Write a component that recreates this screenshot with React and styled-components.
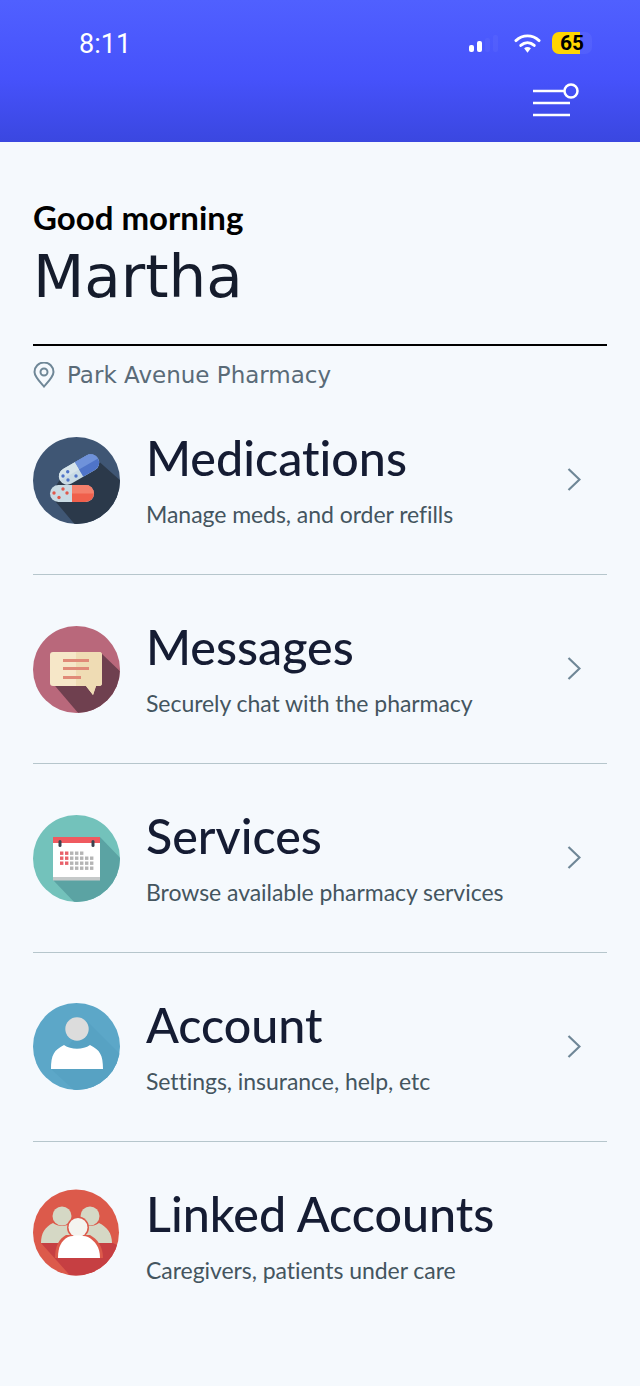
import React from "react";
import styled, { createGlobalStyle } from "styled-components";

const GlobalStyle = createGlobalStyle`
  html, body {
    margin: 0;
    padding: 0;
    background: #f5f9fd;
  }
`;

const MedicationsIcon = () => (
  <svg width="87" height="87" viewBox="0 0 87 87">
    <defs>
      <clipPath id="medClip"><circle cx="43.5" cy="43.5" r="43.5" /></clipPath>
    </defs>
    <circle cx="43.5" cy="43.5" r="43.5" fill="#3f5674" />
    <g clipPath="url(#medClip)">
      <polygon points="17,58 30,38 62,21 90,46 90,90 44,90" fill="#2b394a" />
    </g>
    <g transform="rotate(-30 46 32.5)">
      <rect x="24" y="24" width="44" height="17" rx="8.5" fill="#c9dbe4" />
      <path d="M46 24h13.500a8.500 8.500 0 0 1 0 17H46z" fill="#4f74c8" />
      <path d="M46 24h13.500a8.500 8.500 0 0 1 8.500 8.500H46z" fill="#6f92da" />
      <path d="M24 32.500a8.500 8.500 0 0 1 8.500-8.500H46v8.500z" fill="#d6e4ea" />
    </g>
    <g fill="#4f74c8">
      <circle cx="34.700" cy="34.700" r="1.700" />
      <circle cx="30" cy="39" r="1.700" />
      <circle cx="35" cy="43" r="1.700" />
      <circle cx="43" cy="39" r="1.700" />
    </g>
    <rect x="17" y="48" width="44" height="17" rx="8.5" fill="#c9dbe4" />
    <path d="M39 48h13.5a8.5 8.5 0 0 1 0 17H39z" fill="#f0604c" />
    <path d="M39 48h13.5a8.5 8.5 0 0 1 8.5 8.5H39z" fill="#f4806c" />
    <g fill="#e0594c">
      <circle cx="21" cy="56" r="1.7" />
      <circle cx="30" cy="52" r="1.7" />
      <circle cx="34" cy="56" r="1.7" />
      <circle cx="26" cy="60.500" r="1.7" />
    </g>
  </svg>
);

const MessagesIcon = () => (
  <svg width="87" height="87" viewBox="0 0 87 87">
    <defs>
      <clipPath id="msgClip"><circle cx="43.5" cy="43.5" r="43.5" /></clipPath>
    </defs>
    <circle cx="43.5" cy="43.5" r="43.5" fill="#b9687b" />
    <g clipPath="url(#msgClip)">
      <polygon points="17,54 68,27 92,50 92,92 46,88" fill="#6f404f" />
    </g>
    <path d="M20 26h46a3 3 0 0 1 3 3v28a3 3 0 0 1-3 3h-3l-3 9-7-9H20a3 3 0 0 1-3-3V29a3 3 0 0 1 3-3z" fill="#f6e7c8" />
    <path d="M43 26h23a3 3 0 0 1 3 3v28a3 3 0 0 1-3 3h-3l-3 9-7-9H43z" fill="#efdcb4" />
    <g fill="#e08a78">
      <rect x="30" y="33" width="26" height="3" />
      <rect x="30" y="41" width="26" height="3" />
      <rect x="30" y="50" width="18" height="3" />
    </g>
  </svg>
);

const gridDots = [
  [0, 0, "#e8616a"], [1, 0, "#e8616a"], [2, 0, "#b5b5b5"], [3, 0, "#b5b5b5"], [4, 0, "#b5b5b5"],
  [0, 1, "#e8616a"], [1, 1, "#e8616a"], [2, 1, "#b5b5b5"], [3, 1, "#b5b5b5"], [4, 1, "#b5b5b5"], [5, 1, "#b5b5b5"], [6, 1, "#b5b5b5"],
  [0, 2, "#e8616a"], [1, 2, "#e8616a"], [2, 2, "#b5b5b5"], [3, 2, "#b5b5b5"], [4, 2, "#b5b5b5"], [5, 2, "#b5b5b5"], [6, 2, "#b5b5b5"],
  [2, 3, "#b5b5b5"], [3, 3, "#b5b5b5"], [4, 3, "#b5b5b5"], [5, 3, "#b5b5b5"], [6, 3, "#b5b5b5"],
];

const ServicesIcon = () => (
  <svg width="87" height="87" viewBox="0 0 87 87">
    <defs>
      <clipPath id="calClip"><circle cx="43.5" cy="43.5" r="43.5" /></clipPath>
    </defs>
    <circle cx="43.5" cy="43.5" r="43.5" fill="#73c2bb" />
    <g clipPath="url(#calClip)">
      <polygon points="20,65 67,22 92,48 92,92 44,90" fill="#5ba3a3" />
    </g>
    <rect x="20" y="22" width="47" height="7" fill="#ef5a5f" />
    <rect x="20" y="28" width="47" height="34" fill="#ffffff" />
    <rect x="20" y="62" width="47" height="3.5" fill="#c5c9c9" />
    <rect x="25.5" y="25" width="3" height="7" rx="1.5" fill="#3a4450" />
    <rect x="58.5" y="25" width="3" height="7" rx="1.5" fill="#3a4450" />
    {gridDots.map(([c, r, fill]) => (
      <rect key={`${c}-${r}`} x={27 + c * 5} y={36.5 + r * 5} width="3.4" height="3.4" fill={fill} />
    ))}
  </svg>
);

const AccountIcon = () => (
  <svg width="87" height="87" viewBox="0 0 87 87">
    <defs>
      <clipPath id="accClip"><circle cx="43.5" cy="43.5" r="43.5" /></clipPath>
    </defs>
    <circle cx="43.5" cy="43.5" r="43.5" fill="#5ca7c8" />
    <g clipPath="url(#accClip)">
      <polygon points="18,66 54,18 92,56 92,92 44,90" fill="#57a2c3" />
    </g>
    <circle cx="44" cy="26" r="11.7" fill="#dcdcdc" />
    <path d="M18 66C18 52 21 47 31 42C38 47 50 47 57 42C67 47 70 52 70 66z" fill="#ffffff" />
  </svg>
);

const LinkedIcon = () => (
  <svg width="87" height="87" viewBox="0 0 87 87">
    <defs>
      <clipPath id="linkClip"><circle cx="43" cy="43.5" r="43" /></clipPath>
    </defs>
    <circle cx="43" cy="43.5" r="43" fill="#dc5a4b" />
    <g clipPath="url(#linkClip)">
      <polygon points="8,54 80,54 92,60 92,92 42,92" fill="#c63f42" />
    </g>
    <circle cx="29" cy="27" r="9.500" fill="#d5d8c5" />
    <circle cx="57" cy="27" r="9.500" fill="#d5d8c5" />
    <path d="M8 54C8 44 12 38 20 34C25 38 33 38 38 34L43 37L48 34C53 38 61 38 66 34C74 38 79 44 79 54z" fill="#d5d8c5" />
    <circle cx="45" cy="38.500" r="11" fill="#dc5a4b" />
    <path d="M22 69C22 57 26 50 33 46H57C64 50 70 57 70 69z" fill="#dc5a4b" />
    <circle cx="45" cy="38.500" r="9.500" fill="#f4f4f0" />
    <path d="M25 69C25 58 28 52 35 48C41 46 49 46 55 48C62 52 67 58 67 69z" fill="#ffffff" />
  </svg>
);

const rows = [
  { title: "Medications", note: "Manage meds, and order refills", Icon: MedicationsIcon, lift: 0 },
  { title: "Messages", note: "Securely chat with the pharmacy", Icon: MessagesIcon, lift: 0 },
  { title: "Services", note: "Browse available pharmacy services", Icon: ServicesIcon, lift: 0 },
  { title: "Account", note: "Settings, insurance, help, etc", Icon: AccountIcon, lift: 2 },
  { title: "Linked Accounts", note: "Caregivers, patients under care", Icon: LinkedIcon, lift: 7 },
];

const App = () => {
  return (
    <Page>
      <GlobalStyle />
      <Header>
        <StatusBar>
          <Time>8:11</Time>
          <StatusIcons>
            <Signal>
              <Bar $height={7} />
              <Bar $height={11} />
              <Bar $height={14} $dim />
              <Bar $height={17} $dim />
            </Signal>
            <svg width="27" height="21" viewBox="0 0 28 21">
              <path d="M2 7.500c7-6.500 17-6.500 24 0" fill="none" stroke="#fff" strokeWidth="3" strokeLinecap="round" />
              <path d="M7 12.500c4.200-3.800 9.800-3.800 14 0" fill="none" stroke="#fff" strokeWidth="3" strokeLinecap="round" />
              <path d="M10.500 15.500c2.200-1.800 4.800-1.800 7 0L14 20z" fill="#fff" />
            </svg>
            <Battery>65</Battery>
          </StatusIcons>
        </StatusBar>
        <MenuRow>
          <svg width="48" height="39" viewBox="0 0 48 39">
            <g stroke="#fff" strokeWidth="2.500" fill="none">
              <line x1="0" y1="13" x2="31" y2="13" />
              <line x1="0" y1="25" x2="37" y2="25" />
              <line x1="0" y1="37" x2="37" y2="37" />
              <circle cx="38" cy="13" r="6.500" />
            </g>
          </svg>
        </MenuRow>
      </Header>
      <Main>
        <Greeting>Good morning</Greeting>
        <Name>Martha</Name>
        <Location>
          <svg width="22" height="26" viewBox="0 0 22 26">
            <path d="M11 24.500C6 19 1.500 14.500 1.500 10a9.500 9.500 0 0 1 19 0c0 4.500-4.500 9-9.500 14.500z" fill="none" stroke="#6f8797" strokeWidth="2" />
            <circle cx="11" cy="10" r="3.500" fill="none" stroke="#6f8797" strokeWidth="2" />
          </svg>
          <Pharmacy>Park Avenue Pharmacy</Pharmacy>
        </Location>
        <List>
          {rows.map(({ title, note, Icon, lift }, i) => (
            <Row key={title} $last={i === rows.length - 1}>
              <IconSlot $lift={lift}>
                <Icon />
              </IconSlot>
              <RowText>
                <RowTitle>{title}</RowTitle>
                <RowNote>{note}</RowNote>
              </RowText>
              {i < rows.length - 1 && (
                <Chevron>
                  <svg width="14" height="23" viewBox="0 0 14 23">
                    <path d="M1.500 1l11 10.500-11 10.500" fill="none" stroke="#6f8797" strokeWidth="2.200" />
                  </svg>
                </Chevron>
              )}
            </Row>
          ))}
        </List>
      </Main>
    </Page>
  );
};

const Page = styled.div`
  width: 640px;
  height: 1386px;
  overflow: hidden;
  background: #f5f9fd;
`;

const Header = styled.header`
  height: 142px;
  box-sizing: border-box;
  padding: 30px 48px 0 79px;
  background: linear-gradient(to bottom, #5060ff 0%, #4652fb 55%, #3a47e0 100%);
`;

const StatusBar = styled.div`
  display: flex;
  align-items: center;
  justify-content: space-between;
  height: 26px;
`;

const Time = styled.span`
  margin-top: 2px;
  font-family: Roboto, sans-serif;
  font-size: 27px;
  color: #ffffff;
`;

const StatusIcons = styled.div`
  display: flex;
  align-items: center;
  gap: 11px;
`;

const Signal = styled.div`
  display: flex;
  align-items: flex-end;
  gap: 3px;
  height: 19px;
  margin: 0 5px 2px 0;
`;

const Bar = styled.span`
  width: 5px;
  height: ${(p) => p.$height}px;
  border-radius: 2px;
  background: ${(p) => (p.$dim ? "rgba(255,255,255,0.04)" : "#ffffff")};
`;

const Battery = styled.span`
  width: 40px;
  height: 22px;
  box-sizing: border-box;
  padding-left: 8px;
  border-radius: 7px;
  background: linear-gradient(to right, #ffd500 0 70%, rgba(255, 255, 255, 0.05) 70%);
  font-family: Roboto, sans-serif;
  font-size: 21px;
  font-weight: 700;
  line-height: 22px;
  color: #000000;
`;

const MenuRow = styled.div`
  display: flex;
  justify-content: flex-end;
  margin: 22px 11px 0 0;
`;

const Main = styled.main`
  padding: 56px 33px 0;
`;

const Greeting = styled.div`
  font-family: Lato, sans-serif;
  font-size: 33px;
  font-weight: 700;
  line-height: 38px;
  color: #000000;
`;

const Name = styled.div`
  margin-top: 7px;
  padding-bottom: 33px;
  border-bottom: 2px solid #000000;
  font-family: "DejaVu Sans", sans-serif;
  font-size: 59.500px;
  line-height: 68px;
  color: #151c2c;
`;

const Location = styled.div`
  display: flex;
  align-items: center;
  gap: 12px;
  box-sizing: border-box;
  height: 40px;
  padding-top: 18px;
`;

const Pharmacy = styled.span`
  font-family: "DejaVu Sans", sans-serif;
  font-size: 23px;
  color: #5a6b78;
`;

const List = styled.div`
  display: flex;
  flex-direction: column;
`;

const Row = styled.div`
  display: flex;
  align-items: center;
  box-sizing: border-box;
  height: 189px;
  padding-right: 26px;
  border-bottom: 1px solid ${(p) => (p.$last ? "transparent" : "#b6c6cc")};
`;

const IconSlot = styled.div`
  display: flex;
  margin-bottom: ${(p) => p.$lift}px;
`;

const RowText = styled.div`
  flex: 1;
  margin-left: 26px;
  padding-bottom: 3px;
`;

const RowTitle = styled.div`
  font-family: Lato, sans-serif;
  font-size: 48.400px;
  font-weight: 500;
  line-height: 56px;
  color: #151c33;
  font-variant-ligatures: none;
`;

const RowNote = styled.div`
  margin-top: 15px;
  font-family: Lato, sans-serif;
  font-size: 23px;
  letter-spacing: -0.05px;
  line-height: 28px;
  color: #44555f;
  font-variant-ligatures: none;
`;

const Chevron = styled.div`
  display: flex;
  margin-bottom: 2px;
`;

export default App;
